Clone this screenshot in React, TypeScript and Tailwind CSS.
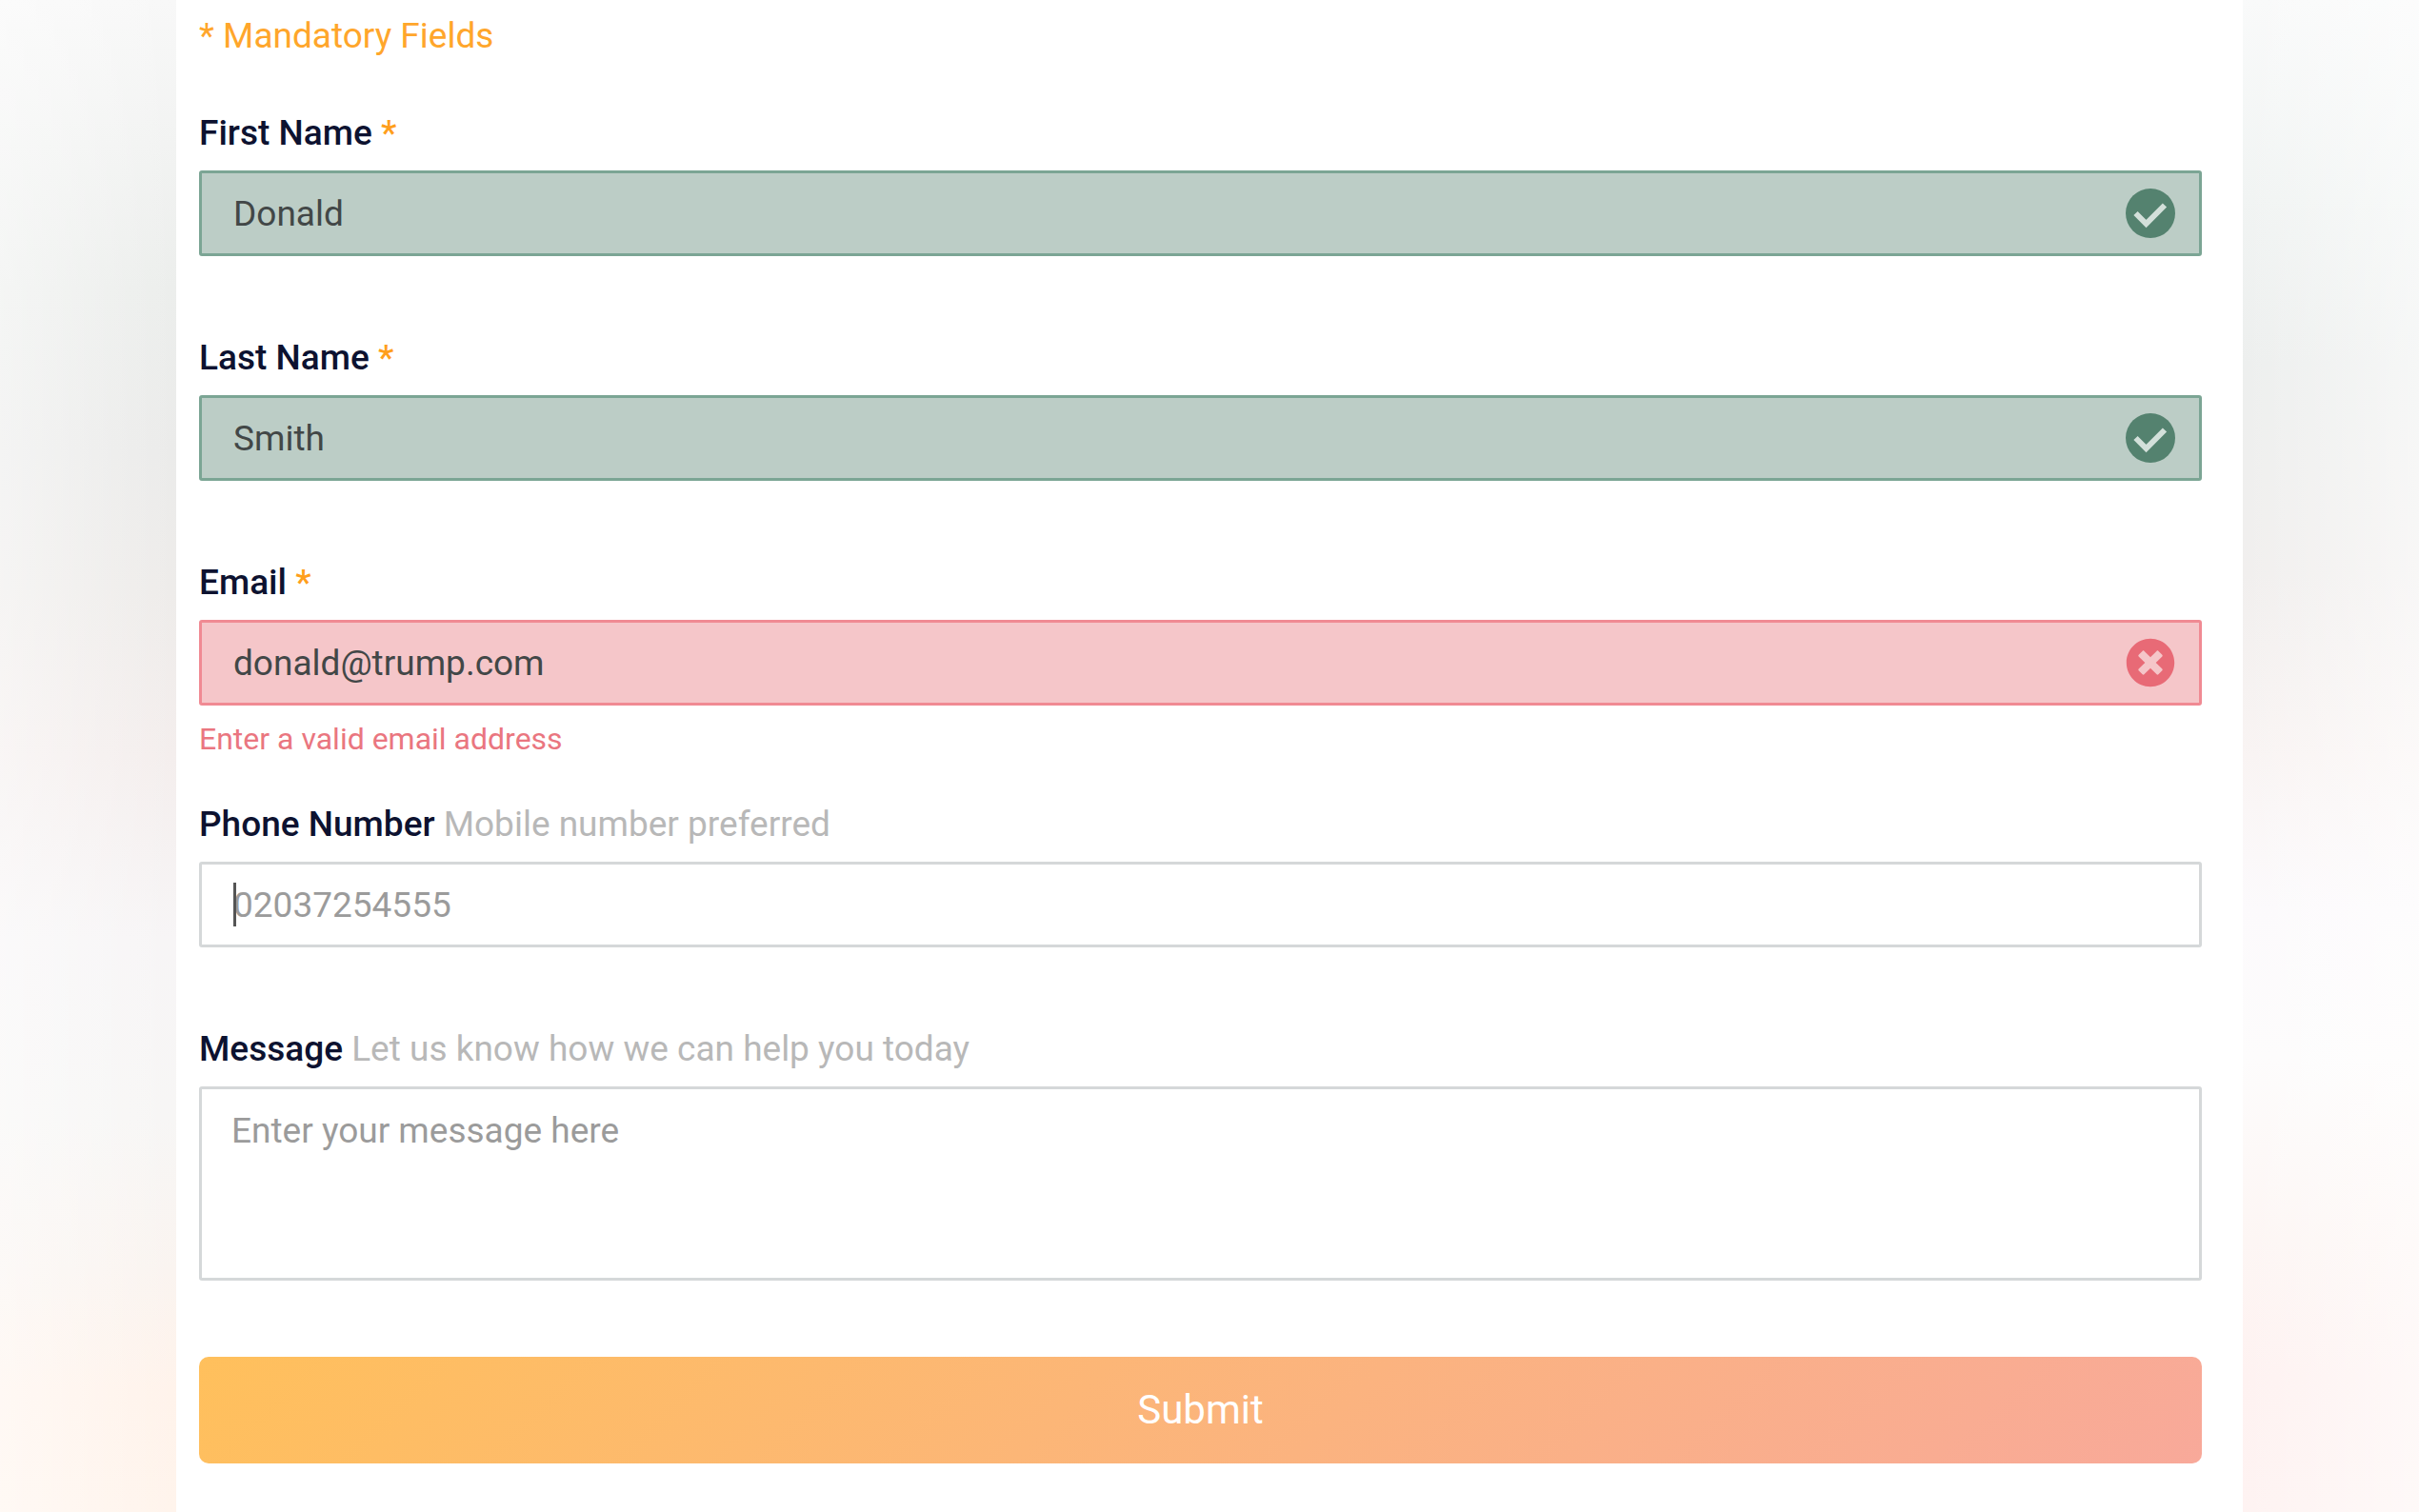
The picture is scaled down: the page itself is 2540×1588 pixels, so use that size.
import React, { useState } from 'react';
import { FaTimesCircle } from 'react-icons/fa';

const CheckBadge = () => (
  <svg viewBox="0 0 52 52" className="w-[52px] h-[52px]" fill="none" aria-hidden="true">
    <circle cx="26" cy="26" r="26" fill="#54826f" />
    <path d="M10.5 26 L21.5 37 L41 17.5" stroke="#d3e0da" strokeWidth="6" />
  </svg>
);

const fieldStyles = {
  valid: 'bg-[#bccdc6] border-[#7ba594]',
  invalid: 'bg-[#f5c6c9] border-[#f08a93]',
  empty: 'bg-white border-[#d5d8d9]'
};

const Label = ({ id, text, required = false, hint = '' }) => (
  <label htmlFor={id} className="block mb-[18px] text-[37px] leading-[42px] font-medium text-[#0d1230]">
    {text}
    {required && <span className="text-[#ff9f1c]"> *</span>}
    {hint && <span className="font-normal text-[#b8b8b8]"> {hint}</span>}
  </label>
);

const TextField = ({ id, label, type = 'text', required = false, hint = '', placeholder = '', status = 'empty', error = '', caret = false, value, onChange }) => (
  <div className={error ? 'mb-[50px]' : 'mb-[86px]'}>
    <Label id={id} text={label} required={required} hint={hint} />
    <div className="relative">
      <input
        id={id}
        type={type}
        value={value}
        placeholder={placeholder}
        onChange={(e) => onChange(id, e.target.value)}
        className={`block w-full h-[90px] px-[33px] border-[3px] rounded-[3px] outline-none text-[37px] leading-[42px] text-[#424747] placeholder:text-[#9b9b9b] ${fieldStyles[status]}`}
      />
      {caret && <span className="absolute left-9 top-[22px] w-[3px] h-[46px] bg-[#555]"></span>}
      {status !== 'empty' && (
        <span className="absolute right-7 inset-y-0 flex items-center">
          {status === 'valid' ? <CheckBadge /> : <FaTimesCircle className="w-[52px] h-[52px] text-[#e86a76]" />}
        </span>
      )}
    </div>
    {error && <p className="mt-4 text-[32px] leading-[38px] text-[#ea7680]">{error}</p>}
  </div>
);

const App = () => {
  const [values, setValues] = useState({
    firstName: 'Donald',
    lastName: 'Smith',
    email: 'donald@trump.com',
    phone: '',
    message: ''
  });

  const handleChange = (id, value) => {
    setValues({ ...values, [id]: value });
  };

  return (
    <div className="min-h-screen grid grid-cols-[185px_1fr_185px] bg-white font-['Roboto',sans-serif]">
      {/* Left glow */}
      <div className="bg-[linear-gradient(to_right,rgba(255,255,255,0.45),rgba(255,255,255,0)),linear-gradient(to_bottom,#f8f8f8_0%,#eceeec_19%,#ebebea_30%,#eeecea_39%,#f4eeed_50%,#f7f5f6_62%,#f7f6f5_74%,#faf4f0_84%,#fff3eb_92%,#fff4ec_100%)]"></div>

      <main className="pt-[17px] pl-6 pr-[43px] pb-[50px] bg-white">
        <form onSubmit={(e) => e.preventDefault()}>
          <p className="mb-[60px] text-[37px] leading-[42px] text-[#ffa62b]">* Mandatory Fields</p>

          <TextField id="firstName" label="First Name" required status="valid" value={values.firstName} onChange={handleChange} />
          <TextField id="lastName" label="Last Name" required status="valid" value={values.lastName} onChange={handleChange} />
          <TextField
            id="email"
            label="Email"
            required
            status="invalid"
            error="Enter a valid email address"
            value={values.email}
            onChange={handleChange}
          />
          <TextField
            id="phone"
            type="tel"
            label="Phone Number"
            hint="Mobile number preferred"
            placeholder="02037254555"
            caret
            value={values.phone}
            onChange={handleChange}
          />

          <Label id="message" text="Message" hint="Let us know how we can help you today" />
          <textarea
            id="message"
            value={values.message}
            placeholder="Enter your message here"
            onChange={(e) => handleChange('message', e.target.value)}
            className="block w-full h-[204px] px-[31px] py-[23px] border-[3px] border-[#d5d8d9] rounded-[3px] resize-none outline-none bg-white text-[37px] leading-[42px] text-[#424747] placeholder:text-[#9b9b9b]"
          />

          <button
            type="submit"
            className="mt-20 w-full h-[112px] rounded-[10px] bg-[linear-gradient(135deg,#ffc05c,#f8a99a)] text-[42px] leading-[48px] text-white"
          >
            Submit
          </button>
        </form>
      </main>

      {/* Right glow */}
      <div className="bg-[linear-gradient(to_left,rgba(255,255,255,0.5),rgba(255,255,255,0)),linear-gradient(to_bottom,#f9fafa_0%,#f1f4f3_13%,#edefee_24%,#f1efee_38%,#f9f4f3_50%,#fcfafc_60%,#fdfcfc_70%,#fdf6f4_82%,#fef2f1_91%,#fef3f2_100%)]"></div>
    </div>
  );
};

export default App;
